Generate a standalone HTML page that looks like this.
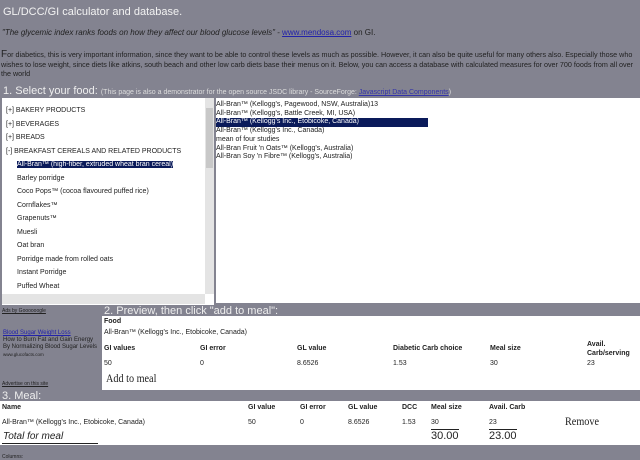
<html><head><style>
body{margin:0;width:640px;height:460px;background:#838390;font-family:"Liberation Sans",sans-serif;position:relative;overflow:hidden;color:#222}
.a{position:absolute;white-space:nowrap}
.w{position:absolute;background:#fff}
.s{font-size:7px}
</style></head><body>
<div class="a" style="left:3px;top:6px;font-size:11px;color:#f2f2f2">GL/DCC/GI calculator and database.</div>
<div class="a" style="left:2px;top:28px;font-size:8px;font-style:italic;color:#222">"The glycemic index ranks foods on how they affect our blood glucose levels" - <span style="color:#2222aa;text-decoration:underline;font-style:normal">www.mendosa.com</span> <span style="font-style:normal">on GI.</span></div>
<div class="a" style="left:1px;top:50px;font-size:7.2px;line-height:9.5px;color:#222;white-space:normal;width:640px"><span style="font-size:10px">F</span>or diabetics, this is very important information, since they want to be able to control these levels as much as possible. However, it can also be quite useful for many others also. Especially those who wishes to lose weight, since diets like atkins, south beach and other low carb diets base their menus on it. Below, you can access a database with calculated measures for over 700 foods from all over the world</div>
<div class="a" style="left:3px;top:85px;font-size:11px;color:#eee">1. Select your food: <span style="font-size:7px;color:#ddd">(This page is also a demonstrator for the open source JSDC library - SourceForge: <span style="color:#3333aa;text-decoration:underline">Javascript Data Components</span>)</span></div>
<div class="w" style="left:2px;top:98px;width:212px;height:207px"></div>
<div class="a" style="left:205px;top:98px;width:9px;height:196px;background:#e4e4e4"></div>
<div class="a" style="left:206px;top:108px;width:7px;height:60px;background:#c8c8c8"></div>
<div class="a" style="left:2px;top:294px;width:203px;height:10px;background:#e4e4e4"></div>
<div class="a s" style="left:6px;top:104px;line-height:13.5px;color:#222">[+] BAKERY PRODUCTS<br>[+] BEVERAGES<br>[+] BREADS<br>[-] BREAKFAST CEREALS AND RELATED PRODUCTS<br>
<span style="margin-left:11px;background:#0a1a5a;color:#fff">All-Bran™ (high-fiber, extruded wheat bran cereal)</span><br>
<span style="margin-left:11px">Barley porridge</span><br><span style="margin-left:11px">Coco Pops™ (cocoa flavoured puffed rice)</span><br><span style="margin-left:11px">Cornflakes™</span><br><span style="margin-left:11px">Grapenuts™</span><br><span style="margin-left:11px">Muesli</span><br><span style="margin-left:11px">Oat bran</span><br><span style="margin-left:11px">Porridge made from rolled oats</span><br><span style="margin-left:11px">Instant Porridge</span><br><span style="margin-left:11px">Puffed Wheat</span></div>
<div class="w" style="left:216px;top:98px;width:424px;height:205px"></div>
<div class="a" style="left:216px;top:101px;font-size:7px;line-height:8.7px;color:#222">All-Bran™ (Kellogg's, Pagewood, NSW, Australia)13<br>All-Bran™ (Kellogg's, Battle Creek, MI, USA)<br><span style="background:#0a1a5a;color:#fff;display:inline-block;width:212px">All-Bran™ (Kellogg's Inc., Etobicoke, Canada)</span><br>All-Bran™ (Kellogg's Inc., Canada)<br>mean of four studies<br>All-Bran Fruit 'n Oats™ (Kellogg's, Australia)<br>All-Bran Soy 'n Fibre™ (Kellogg's, Australia)</div>
<div class="a" style="left:2px;top:308px;font-size:5px;text-decoration:underline">Ads by Goooooogle</div>
<div class="a" style="left:3px;top:330px;font-size:6px;line-height:7px;white-space:normal;width:95px"><span style="color:#2222aa;text-decoration:underline">Blood Sugar Weight Loss</span><br>How to Burn Fat and Gain Energy By Normalizing Blood Sugar Levels<br><span style="font-size:4.5px">www.glucofacts.com</span></div>
<div class="a" style="left:2px;top:381px;font-size:5px;text-decoration:underline">Advertise on this site</div>
<div class="a" style="left:104px;top:305px;font-size:11px;color:#eee">2. Preview, then click "add to meal":</div>
<div class="w" style="left:102px;top:316px;width:538px;height:74px"></div>
<div class="a" style="left:104px;top:318px;font-size:7px;font-weight:bold">Food</div>
<div class="a" style="left:104px;top:329px;font-size:7px">All-Bran™ (Kellogg's Inc., Etobicoke, Canada)</div>
<div class="a s" style="left:104px;top:345px;font-weight:bold">GI values</div><div class="a s" style="left:200px;top:345px;font-weight:bold">GI error</div><div class="a s" style="left:297px;top:345px;font-weight:bold">GL value</div><div class="a s" style="left:393px;top:345px;font-weight:bold">Diabetic Carb choice</div><div class="a s" style="left:490px;top:345px;font-weight:bold">Meal size</div><div class="a s" style="left:587px;top:340px;font-weight:bold;line-height:9px">Avail.<br>Carb/serving</div>
<div class="a s" style="left:104px;top:360px">50</div><div class="a s" style="left:200px;top:360px">0</div><div class="a s" style="left:297px;top:360px">8.6526</div><div class="a s" style="left:393px;top:360px">1.53</div><div class="a s" style="left:490px;top:360px">30</div><div class="a s" style="left:587px;top:360px">23</div>
<div class="a" style="left:106px;top:371px;font-size:12px;font-family:'Liberation Serif',serif;transform:scaleX(.85);transform-origin:left">Add to meal</div>
<div class="a" style="left:2px;top:390px;font-size:11px;color:#eee">3. Meal:</div>
<div class="w" style="left:0;top:401px;width:640px;height:44px"></div>
<div class="a s" style="left:2px;top:404px;font-weight:bold">Name</div><div class="a s" style="left:248px;top:404px;font-weight:bold">GI value</div><div class="a s" style="left:300px;top:404px;font-weight:bold">GI error</div><div class="a s" style="left:348px;top:404px;font-weight:bold">GL value</div><div class="a s" style="left:402px;top:404px;font-weight:bold">DCC</div><div class="a s" style="left:431px;top:404px;font-weight:bold">Meal size</div><div class="a s" style="left:489px;top:404px;font-weight:bold">Avail. Carb</div>
<div class="a s" style="left:2px;top:419px">All-Bran™ (Kellogg's Inc., Etobicoke, Canada)</div><div class="a s" style="left:248px;top:419px">50</div><div class="a s" style="left:300px;top:419px">0</div><div class="a s" style="left:348px;top:419px">8.6526</div><div class="a s" style="left:402px;top:419px">1.53</div><div class="a s" style="left:431px;top:419px">30</div><div class="a s" style="left:489px;top:419px">23</div>
<div class="a" style="left:565px;top:414px;font-size:12px;font-family:'Liberation Serif',serif;transform:scaleX(.85);transform-origin:left">Remove</div>
<div class="a" style="left:3px;top:431px;font-size:10px;font-style:italic">Total for meal</div>
<div class="a" style="left:2px;top:443px;width:96px;height:1px;background:#222"></div>
<div class="a" style="left:431px;top:429px;font-size:11px;border-top:1px solid #222;width:28px">30.00</div>
<div class="a" style="left:489px;top:429px;font-size:11px;border-top:1px solid #222;width:28px">23.00</div>
<div class="a" style="left:2px;top:454px;font-size:5px">Columns:</div>
</body></html>
